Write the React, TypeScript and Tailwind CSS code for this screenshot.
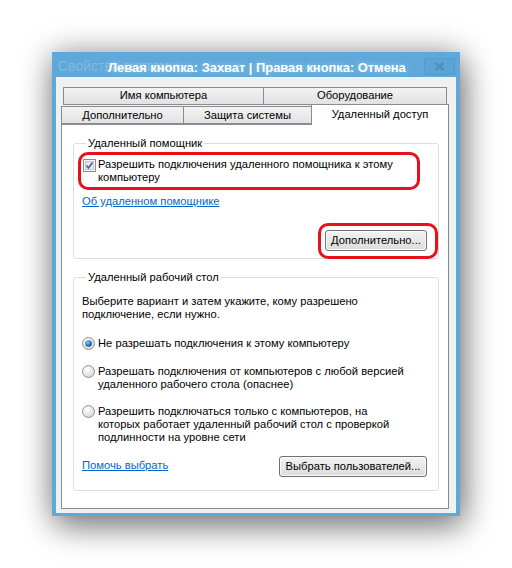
const FONT = "font-['Liberation_Sans',Arial,sans-serif]"

function Tab({ label, className }: { label: string; className: string }) {
  return (
    <div
      className={
        "flex items-center justify-center border border-[#898c95] bg-gradient-to-b from-[#f3f3f3] to-[#e2e2e2] text-[11.2px] leading-none text-black " +
        className
      }
    >
      {label}
    </div>
  )
}

function Checkbox() {
  return (
    <svg width="13" height="13" viewBox="0 0 13 13" className="shrink-0">
      <rect x="0.5" y="0.5" width="12" height="12" fill="#f4f4f4" stroke="#8f8f8f" />
      <rect x="2.5" y="2.5" width="8" height="8" fill="#e3e6ee" stroke="#c6cad6" />
      <path d="M3.5 6.5 L5.5 9 L9.5 3.5" fill="none" stroke="#4b5f97" strokeWidth="1.6" />
    </svg>
  )
}

function Radio({ on }: { on?: boolean }) {
  return (
    <svg width="13" height="13" viewBox="0 0 13 13" className="shrink-0">
      <defs>
        <radialGradient id="rbg" cx="0.35" cy="0.3" r="0.8">
          <stop offset="0" stopColor="#ffffff" />
          <stop offset="1" stopColor="#d4d4d4" />
        </radialGradient>
        <radialGradient id="rdot" cx="0.4" cy="0.35" r="0.7">
          <stop offset="0" stopColor="#7fd3ff" />
          <stop offset="0.6" stopColor="#1f7dc1" />
          <stop offset="1" stopColor="#0b3f73" />
        </radialGradient>
      </defs>
      <circle cx="6.5" cy="6.5" r="6" fill="url(#rbg)" stroke="#8e8f8f" />
      {on && <circle cx="6.5" cy="6.5" r="3.3" fill="url(#rdot)" />}
    </svg>
  )
}

function Button({ label, className }: { label: string; className: string }) {
  return (
    <div
      className={
        "flex h-[21px] items-center justify-center rounded-[3px] border border-[#707070] bg-gradient-to-b from-[#f3f3f3] to-[#dcdcdc] text-[11.2px] text-black shadow-[inset_0_0_0_1px_#fcfcfc] " +
        className
      }
    >
      {label}
    </div>
  )
}

function Group({ title, children, className }: { title: string; children: React.ReactNode; className?: string }) {
  return (
    <fieldset className={"rounded-[3px] border border-[#d5dfe5] pl-[8px] pr-[11px] " + (className ?? "")}>
      <legend className="ml-[4px] px-[2px] text-[11.2px] leading-[14px] text-black">{title}</legend>
      {children}
    </fieldset>
  )
}

export default function App() {
  return (
    <div className={"h-[568px] w-[512px] overflow-hidden bg-white pl-[52px] pt-[52px] " + FONT}>
      <div className="w-[408px] bg-[#5ea9da] px-[4px] pb-[3px] shadow-[0_0_30px_rgba(0,0,0,0.3),4px_12px_30px_rgba(0,0,0,0.4)]">
        {/* title bar */}
        <div className="relative flex h-[25px] items-center justify-between">
          <span className="pl-[2px] pt-[3px] text-[14px] text-[#84b8dd]">Свойства системы</span>
          <span className="absolute left-[52px] top-[6px] text-[12.9px] font-bold text-white [text-shadow:0_0_6px_rgba(255,255,255,0.4)]">
            Левая кнопка: Захват | Правая кнопка: Отмена
          </span>
          <div className="mr-[1px] mt-[4px] flex h-[17px] w-[31px] items-center justify-center rounded-[2px] border border-[#5499c8] bg-[#5aa4d6]">
            <svg width="11" height="9" viewBox="0 0 11 9">
              <path d="M1.5 1 L9.5 8 M9.5 1 L1.5 8" stroke="#4f8fc0" strokeWidth="2.4" />
            </svg>
          </div>
        </div>

        {/* client area */}
        <div className="h-[436px] bg-[#f0f0f0] pl-[5px] pr-[7px] pt-[10px]">
          <div className="flex pl-[2px]">
            <Tab label="Имя компьютера" className="h-[18px] w-[201px]" />
            <Tab label="Оборудование" className="-ml-px h-[18px] w-[184px]" />
          </div>
          <div className="-mt-px flex items-end">
            <Tab label="Дополнительно" className="h-[18px] w-[123px] pt-[2px]" />
            <Tab label="Защита системы" className="-ml-px h-[18px] w-[129px] pt-[2px]" />
            <div className="relative z-10 -mb-px -ml-px flex h-[21px] w-[138px] items-start justify-center border border-b-0 border-[#898c95] bg-white pt-[4px] text-[11.2px] leading-none text-black">
              Удаленный доступ
            </div>
          </div>

          {/* panel */}
          <div className="h-[385px] w-[388px] border border-[#898c95] bg-white pl-[11px] pr-[9px] pt-[11px]">
            <Group title="Удаленный помощник" className="h-[123px]">
              <div className="-ml-[4px] mt-[2px] flex w-[342px] gap-[2px] rounded-[10px] border-[3px] border-[#e8101a] py-[3px] pl-[2px]">
                <div className="pt-[1px]">
                  <Checkbox />
                </div>
                <p className="text-[11.2px] leading-[13px] text-black">
                  Разрешить подключения удаленного помощника к этому
                  <br />
                  компьютеру
                </p>
              </div>
              <a className="mt-[4px] block text-[11.2px] leading-[14px] text-[#0066cc] underline">Об удаленном помощнике</a>
              <div className="-mr-[11px] mt-[15px] flex justify-end">
                <div className="rounded-[10px] border-[3px] border-[#e8101a] pb-[5px] pl-[4px] pr-[8px] pt-[4px]">
                  <Button label="Дополнительно..." className="w-[102px]" />
                </div>
              </div>
            </Group>

            <Group title="Удаленный рабочий стол" className="mt-[11px] h-[221px]">
              <p className="mt-[11px] text-[11.2px] leading-[13px] text-black">
                Выберите вариант и затем укажите, кому разрешено
                <br />
                подключение, если нужно.
              </p>
              <div className="mt-[16px] flex gap-[3px]">
                <Radio on />
                <span className="text-[11.2px] leading-[13px] text-black">Не разрешать подключения к этому компьютеру</span>
              </div>
              <div className="mt-[15px] flex gap-[3px]">
                <Radio />
                <span className="text-[11.2px] leading-[13px] text-black">
                  Разрешать подключения от компьютеров с любой версией
                  <br />
                  удаленного рабочего стола (опаснее)
                </span>
              </div>
              <div className="mt-[14px] flex gap-[3px]">
                <Radio />
                <span className="text-[11.2px] leading-[13px] text-black">
                  Разрешить подключаться только с компьютеров, на
                  <br />
                  которых работает удаленный рабочий стол с проверкой
                  <br />
                  подлинности на уровне сети
                </span>
              </div>
              <div className="mt-[12px] flex items-center justify-between">
                <a className="-mt-[2px] text-[11.2px] text-[#0066cc] underline">Помочь выбрать</a>
                <Button label="Выбрать пользователей..." className="w-[148px]" />
              </div>
            </Group>
          </div>
        </div>
      </div>
    </div>
  )
}
